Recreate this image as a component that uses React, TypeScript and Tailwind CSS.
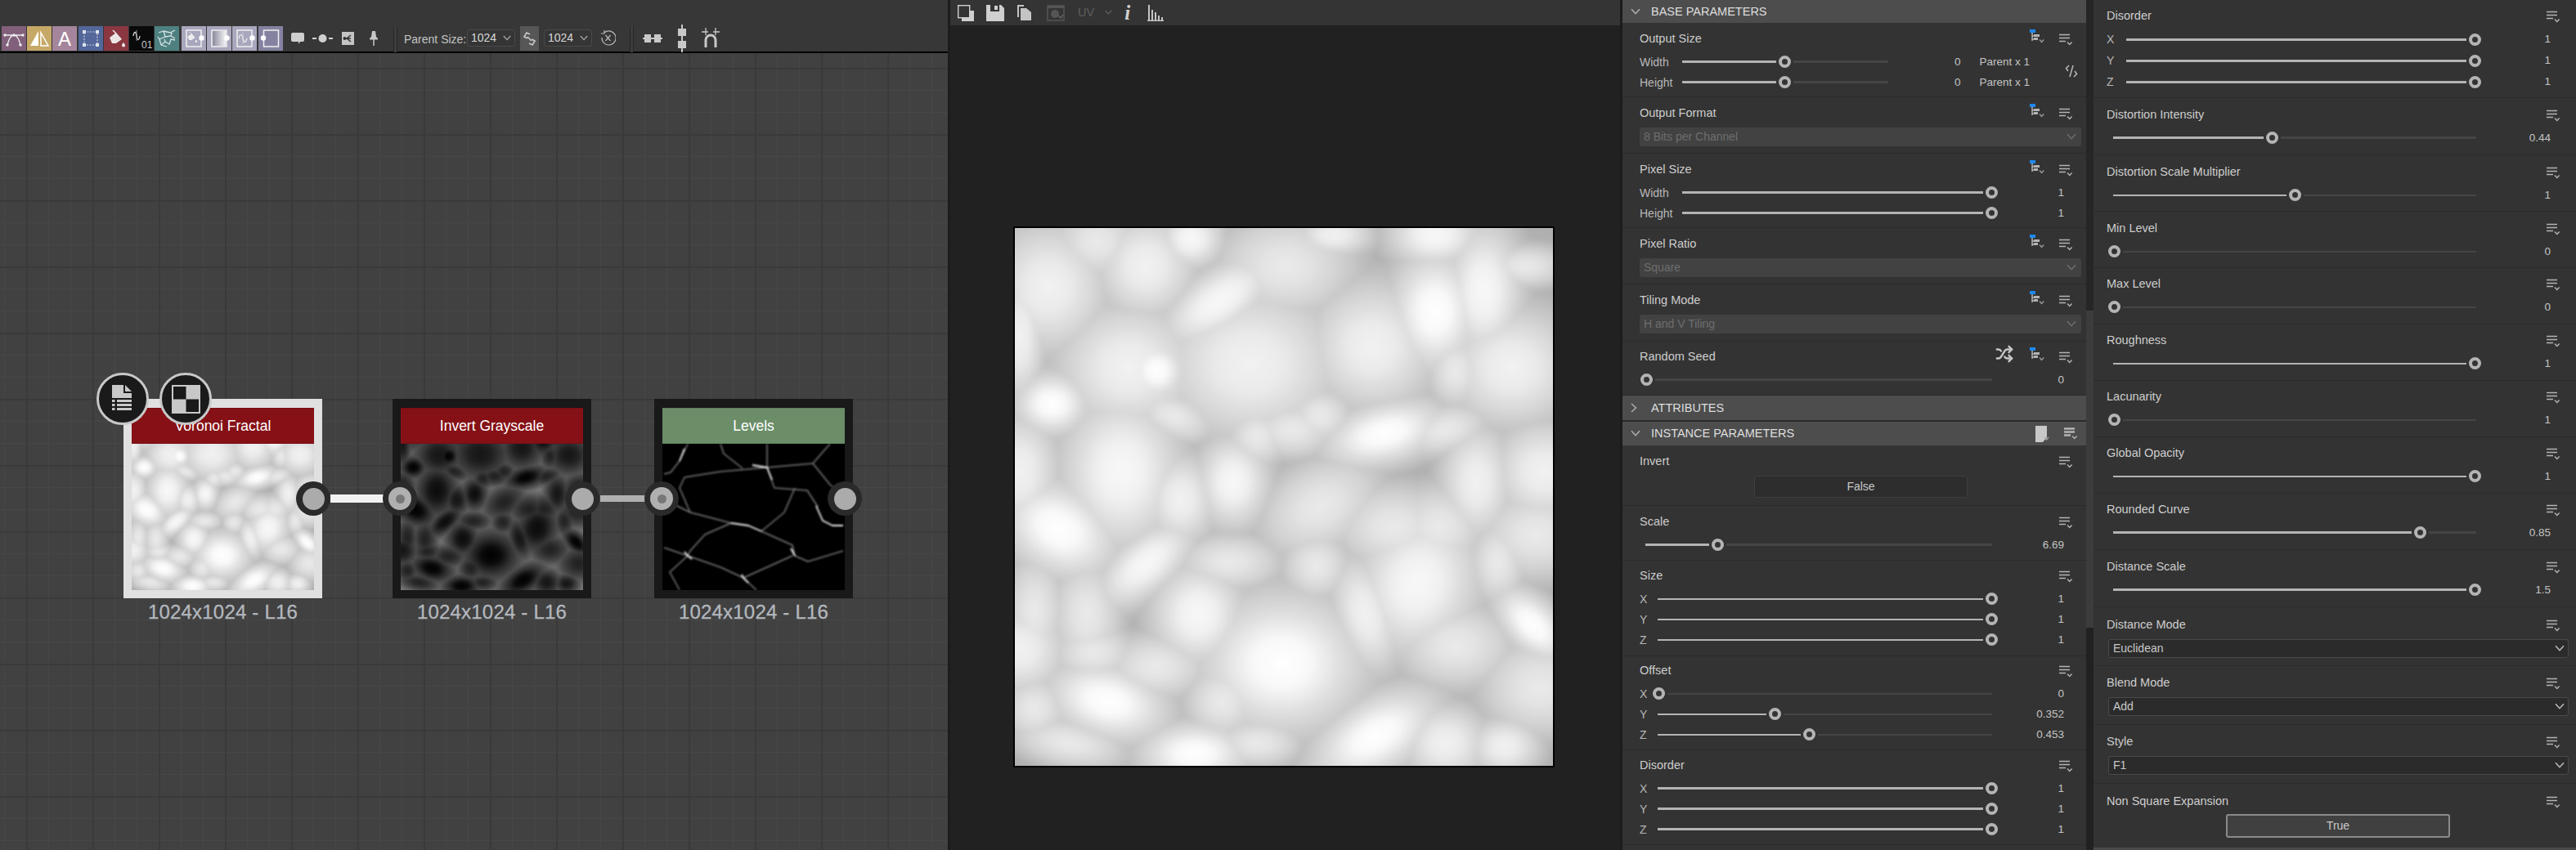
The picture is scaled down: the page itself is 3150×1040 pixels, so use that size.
import React from "react";
import { Shuffle } from "lucide-react";

type Blob = [number, number, number, number, number, number];
const BLOBS: Blob[] = [
  [350, 420, 150, 135, 0, 2], [430, 430, 60, 60, 0, 0], [700, 410, 190, 160, 0, 2], [610, 230, 140, 65, -35, 1],
  [400, 130, 105, 110, 0, 2], [130, 525, 75, 62, 0, 0], [330, 720, 125, 160, 0, 1], [1085, 610, 125, 62, -15, 0],
  [1230, 260, 90, 120, 0, 0], [1370, 200, 80, 140, 0, 1], [1050, 360, 135, 135, 0, 2], [650, 750, 75, 95, 0, 1],
  [150, 885, 125, 90, 30, 0], [400, 985, 125, 60, -40, 1], [550, 1130, 95, 105, 0, 1], [790, 1270, 165, 140, 0, 0],
  [1180, 1040, 125, 150, 20, 1], [1110, 880, 125, 90, 0, 3], [290, 1380, 125, 75, 15, 0], [1060, 1480, 140, 75, -30, 0],
  [1510, 1160, 95, 52, 45, 0], [1450, 420, 140, 125, 0, 2], [1030, 1130, 65, 125, -15, 2], [900, 820, 140, 95, -30, 3],
  [40, 1230, 95, 95, 0, 2], [230, 1130, 75, 120, 0, 3], [540, 1530, 110, 62, 0, 0], [1350, 750, 75, 120, 0, 2],
  [1540, 720, 105, 105, 0, 2], [500, 800, 75, 95, 0, 2], [120, 190, 125, 135, 0, 2], [800, 130, 150, 110, 0, 3],
  [1230, 40, 95, 65, 0, 1], [530, 50, 65, 60, 0, 1], [940, 40, 80, 45, 0, 2], [40, 720, 80, 125, 0, 2],
  [40, 330, 50, 140, 0, 2], [1290, 1220, 125, 90, 0, 3], [890, 990, 72, 72, 0, 3], [1530, 1340, 125, 105, 0, 3],
  [1260, 600, 95, 52, -15, 3], [1490, 130, 90, 45, 0, 3], [1260, 1500, 90, 80, 0, 2], [1430, 1510, 75, 60, 0, 2],
  [820, 600, 95, 60, 0, 3], [720, 620, 65, 65, 30, 3], [180, 1500, 125, 52, 10, 3], [720, 1500, 95, 52, 0, 3],
  [80, 1120, 65, 120, 0, 3], [1520, 900, 125, 95, 0, 3], [260, 60, 95, 80, 0, 3],
  [900, 560, 70, 60, 0, 3], [1240, 880, 100, 90, 0, 3], [480, 560, 90, 50, 20, 3], [430, 1280, 110, 70, 0, 3], [620, 1380, 80, 80, 0, 3],
  [1290, 430, 60, 80, 0, 3], [250, 1240, 90, 60, 0, 3], [640, 980, 110, 60, 0, 3], [1410, 980, 60, 90, 0, 3], [80, 1400, 70, 70, 0, 3],
];
const STOPS: string[][] = [
  ["#ffffff", "#f8f8f8", "#e0e0e0", "#a8a8a8"],
  ["#f8f8f8", "#f1f1f1", "#dcdcdc", "#a4a4a4"],
  ["#f2f2f2", "#eaeaea", "#d8d8d8", "#a0a0a0"],
  ["#eaeaea", "#e2e2e2", "#d3d3d3", "#9c9c9c"],
];

function Voronoi({ className }: { className?: string }) {
  return (
    <svg viewBox="24 20 1545 1545" preserveAspectRatio="none" className={className}>
      <defs>
        {STOPS.map((s, i) => (
          <radialGradient key={i} id={`vt${i}`}>
            <stop offset="0%" stopColor={s[0]} />
            <stop offset="22%" stopColor={s[1]} />
            <stop offset="43%" stopColor={s[2]} />
            <stop offset="100%" stopColor={s[3]} />
          </radialGradient>
        ))}
        <filter id="vblur" x="-5%" y="-5%" width="110%" height="110%">
          <feGaussianBlur stdDeviation="6" />
        </filter>
      </defs>
      <g filter="url(#vblur)" className="isolate">
        <rect x="-100" y="-100" width="1800" height="1800" fill="#b0b0b0" />
        {BLOBS.map(([x, y, rx, ry, r, t], i) => (
          <ellipse key={i} cx={x} cy={y} rx={rx * 2.3} ry={ry * 2.3} transform={`rotate(${r} ${x} ${y})`} fill={`url(#vt${t})`} className="mix-blend-lighten" />
        ))}
      </g>
    </svg>
  );
}

function LevelLines() {
  const faint = [
    "M31 0L21 21L10 35L2 37",
    "M71 0L75 12L98 30",
    "M128 0L128 29",
    "M27 41L21 54L34 84",
    "M27 41L71 34L128 29L184 24L205 0",
    "M128 29L137 54L177 57L190 77",
    "M162 54L149 84L121 107",
    "M84 97L46 87L34 84L10 72",
    "M84 97L52 111L34 131L31 137L9 157L21 179",
    "M2 127L31 137L71 151L99 164L115 179",
    "M99 164L159 137",
    "M121 107L159 124L162 137L178 144L221 131",
    "M184 24L205 50L221 62",
  ];
  const bright = ["M110 26L128 29L134 44", "M84 97L105 100L121 107", "M188 76L196 94L208 100L221 100", "M27 132L31 137L36 141", "M21 21L27 6", "M97 160L99 164L105 170", "M157 128L162 137"];
  return (
    <svg width="223" height="179" viewBox="0 0 223 179" fill="none" strokeLinejoin="round" className="block">
      <defs><filter id="lvb" x="-5%" y="-5%" width="110%" height="110%"><feGaussianBlur stdDeviation="0.8" /></filter></defs>
      <rect width="223" height="179" fill="#000000" />
      <g filter="url(#lvb)">
        <g stroke="#7c7c7c" strokeWidth="1.5">{faint.map((d) => <path key={d} d={d} />)}</g>
        <g stroke="#f0f0f0" strokeWidth="1.8">{bright.map((d) => <path key={d} d={d} />)}</g>
      </g>
    </svg>
  );
}

/* ---------- small parameter icons ---------- */
function ListIcon({ bold }: { bold?: boolean }) {
  const w = bold ? 2.6 : 1.5;
  return (
    <svg width="17" height="15" viewBox="0 0 17 15" className="shrink-0" fill="none" stroke="#b4b4b4">
      <path d="M0 1.5H13M0 5.5H13M0 9.5H8" strokeWidth={w} />
      <path d="M10 10.5l2.8 3 2.8-3" strokeWidth="1.4" />
    </svg>
  );
}
function InheritIcon() {
  return (
    <svg width="19" height="18" viewBox="0 0 19 18" className="shrink-0" fill="none">
      <rect x="0" y="0" width="7" height="4" fill="#1e88ef" />
      <path d="M3 4V14M3 8H11M3 12H9" stroke="#b4b4b4" strokeWidth="1.5" />
      <rect x="5" y="6" width="7" height="3" fill="#b4b4b4" />
      <rect x="5" y="10" width="5" height="3" fill="#b4b4b4" />
      <path d="M12 12.5l2.6 3 2.6-3" stroke="#9a9a9a" strokeWidth="1.4" />
    </svg>
  );
}
function Chevron({ cls = "#8a8a8a", size = 12 }: { cls?: string; size?: number }) {
  return (
    <svg width={size} height={size * 0.7} viewBox="0 0 12 8" className="shrink-0" fill="none" stroke={cls}>
      <path d="M1 1l5 5.5L11 1" strokeWidth="1.5" />
    </svg>
  );
}
function BrokenLink() {
  return (
    <svg width="16" height="16" viewBox="0 0 16 16" fill="none" stroke="#b4b4b4" strokeWidth="1.6">
      <path d="M5 1L1.5 4.5 4 8M11 15l3.5-3.5L12 8M10 1L6 15" />
    </svg>
  );
}

/* ---------- slider ---------- */
function Slider({ label, w, tc, value, thin, p2, extra }: { label?: string; w: number; tc: number; value?: string; thin?: boolean; p2?: boolean; extra?: React.ReactNode }) {
  const thumbStart = tc - 7.5;
  const fill = Math.max(0, thumbStart - 3);
  const h = thin ? "h-[2px]" : "h-[3px]";
  const xyz = label && label.length === 1;
  const pl = label ? (p2 ? "pl-[16px]" : "pl-[21px]") : p2 ? "pl-[24px]" : "pl-[28px]";
  const lw = xyz ? (p2 ? "w-[24px]" : "w-[22px]") : "w-[52px]";
  const pr = p2 ? "pr-[31px]" : "pr-[27px]";
  return (
    <div className={`flex items-center h-[25px] ${pl} ${pr}`}>
      {label && <span className={`${lw} mt-[1px] text-[14px] text-[#b8b8b8] shrink-0`}>{label}</span>}
      <div className="flex items-center shrink-0" style={{ width: w }}>
        {fill > 0 && <div className={`${h} bg-[#b4b4b4] shrink-0`} style={{ width: fill, marginRight: 3 }} />}
        <div className="w-[15px] h-[15px] rounded-full border-4 border-[#b4b4b4] bg-[#333333] shrink-0" style={fill > 0 ? undefined : { marginLeft: thumbStart }} />
        <div className={`${h} flex-1 ml-[3px] bg-[#454545]`} />
      </div>
      {extra}
      {value && <span className="ml-auto mt-[1px] text-[13.5px] text-[#c4c4c4]">{value}</span>}
    </div>
  );
}

/* ---------- rows ---------- */
function Row({ h, title, p2, inherit, shuffle, children, pad = "pt-[3px]" }: { h: string; title: string; p2?: boolean; inherit?: boolean; shuffle?: boolean; children?: React.ReactNode; pad?: string }) {
  return (
    <div className={`${h} ${pad} shrink-0 border-b border-[#2b2b2b]`}>
      <div className={`flex items-center h-[32px] ${p2 ? "pl-[16px] pr-[19px]" : "pl-[21px] pr-[16px]"}`}>
        <span className="mt-[1px] text-[14.5px] text-[#cdcdcd]">{title}</span>
        <div className="ml-auto flex items-center">
          {shuffle && <Shuffle size={22} strokeWidth={2.6} color="#c8c8c8" className="mr-[20px] -mt-[6px]" />}
          {inherit && <div className="mr-[17px] -mt-[4px]"><InheritIcon /></div>}
          <div className="mt-[3px]"><ListIcon /></div>
        </div>
      </div>
      {children}
    </div>
  );
}

function Disabled({ text }: { text: string }) {
  return (
    <div className="mt-[2px] ml-[21px] w-[540px] h-[23px] rounded-[3px] bg-[#424242] flex items-center pl-[5px] pr-[6px] text-[14px] text-[#6e6e6e]">
      <span>{text}</span>
      <span className="ml-auto"><Chevron cls="#6e6e6e" /></span>
    </div>
  );
}
function Drop({ text }: { text: string }) {
  return (
    <div className="mt-[2px] ml-[18px] w-[563px] h-[23px] rounded-[3px] bg-[#2b2b2b] border border-[#4a4a4a] flex items-center pl-[5px] pr-[4px] text-[14px] text-[#c8c8c8]">
      <span>{text}</span>
      <span className="ml-auto"><Chevron cls="#bcbcbc" /></span>
    </div>
  );
}
function Section({ title, open, h, right }: { title: string; open?: boolean; h: string; right?: React.ReactNode }) {
  return (
    <div className={`${h} shrink-0 flex items-center bg-[#4d4d4d] pl-[10px] pr-[10px]`}>
      <span className="w-[25px]">
        {open ? (
          <Chevron cls="#b0b0b0" />
        ) : (
          <svg width="8" height="12" viewBox="0 0 8 12" fill="none" stroke="#b0b0b0" strokeWidth="1.4"><path d="M1 1l5.5 5L1 11" /></svg>
        )}
      </span>
      <span className="mt-[1px] text-[14.5px] text-[#dedede]">{title}</span>
      {right && <span className="ml-auto flex items-center gap-[17px]">{right}</span>}
    </div>
  );
}

/* ---------- toolbar tiles ---------- */
const Frame = ({ x = 6, children }: { x?: number; children?: React.ReactNode }) => (
  <>
    <rect x={x} y="5" width="18" height="20" fill="none" stroke="#f0f0f0" strokeWidth="1.5" />
    {children}
  </>
);
function Tile({ bg, children, cls = "" }: { bg: string; children: React.ReactNode; cls?: string }) {
  return (
    <div className={`w-[30px] h-[30px] shrink-0 ${bg} ${cls}`}>
      <svg width="30" height="30" viewBox="0 0 30 30">{children}</svg>
    </div>
  );
}
const Bucket = ({ t = "", c = "#f0f0f0" }: { t?: string; c?: string }) => (
  <g transform={t} fill="none" stroke={c} strokeWidth="1.5">
    <path d="M7 14L15 8l7 8-7 5H10z" fill={c} stroke="none" opacity="0.95" />
    <path d="M11 5l4 4" />
    <path d="M24 20c1.5 2 2 3 2 3.6a2 2 0 01-4 0c0-.6.5-1.6 2-3.6z" fill={c} stroke="none" />
  </g>
);
function ToolTiles() {
  return (
    <div className="flex items-center">
      <div className="flex gap-[1px] ml-[2px]">
        <Tile bg="bg-[#82607b]">
          <path d="M4 11H26M7 23C9 15 12 11 15 11s6 4 8 12" fill="none" stroke="#eeeeee" strokeWidth="1.3" />
          {[[4, 11], [15, 11], [26, 11], [7, 23], [23, 23]].map(([x, y]) => <circle key={`${x}${y}`} cx={x} cy={y} r="1.7" fill="#eeeeee" />)}
        </Tile>
        <Tile bg="bg-[#c6a966]">
          <polygon points="14,6 14,24 4,24" fill="#fff" />
          <polygon points="17,8 17,24 26,24" fill="none" stroke="#fff" strokeWidth="1.5" />
        </Tile>
        <Tile bg="bg-[#a5859b]">
          <text x="15" y="24" textAnchor="middle" fontSize="24" fontFamily="Liberation Sans" fill="#fff">A</text>
        </Tile>
      </div>
      <div className="flex gap-[1px] ml-[2px]">
        <Tile bg="bg-[#53679a]">
          <rect x="7" y="7" width="16" height="16" fill="none" stroke="#c9d0e4" strokeWidth="1.2" strokeDasharray="2 1.6" />
          {[[7, 7], [23, 7], [7, 23], [23, 23]].map(([x, y]) => <rect key={`${x}${y}`} x={x - 2} y={y - 2} width="4" height="4" fill="#dde2ee" />)}
        </Tile>
        <Tile bg="bg-[#8a3742]"><Bucket /></Tile>
        <Tile bg="bg-[#0a0a0a]">
          <path d="M5 12c1-6 3-6 4 0s3 6 4 0" fill="none" stroke="#d8d8d8" strokeWidth="1.3" />
          <path d="M9 5V18" stroke="#9a9a9a" strokeWidth="1" />
          <text x="15" y="27" fontSize="12" fontFamily="Liberation Sans" fill="#c8c8c8">01</text>
        </Tile>
        <Tile bg="bg-[#4e8080]">
          <path d="M5 8l6-2 8 2 6-3M11 6l2 7-7 3-2-3M13 13l7-1 1-4M20 12l5 3M6 16l2 7 7 2M8 23l5-4 5 3 2-6 5 1M13 19l-1-3" fill="none" stroke="#d6e2e2" strokeWidth="1.3" />
        </Tile>
      </div>
      <div className="flex gap-[1px] ml-[3px]">
        <Tile bg="bg-[#a9a7bd]">
          <Frame><g transform="translate(3 4) scale(0.62)"><Bucket /></g></Frame>
          <circle cx="24.5" cy="14.5" r="3.2" fill="#fff" />
        </Tile>
        <Tile bg="bg-[#a9a7bd]">
          <defs><linearGradient id="tg"><stop offset="0%" stopColor="#8a8aa0" /><stop offset="100%" stopColor="#f4f4f4" /></linearGradient></defs>
          <Frame><rect x="7" y="6" width="16" height="18" fill="url(#tg)" /></Frame>
          <circle cx="24.5" cy="14.5" r="3.2" fill="#fff" />
        </Tile>
        <Tile bg="bg-[#a9a7bd]">
          <Frame><path d="M8 15c1.5-6 3.5-6 5 0s3.500 6 5 0" fill="none" stroke="#f0f0f0" strokeWidth="1.2" /><path d="M13 8v14" stroke="#d8d8e0" strokeWidth="0.8" /></Frame>
          <circle cx="24.5" cy="14.5" r="3.2" fill="#fff" />
        </Tile>
      </div>
      <div className="ml-[2px]">
        <Tile bg="bg-[#8482a0]">
          <Frame x={6.5} />
          <circle cx="6" cy="14.5" r="3.2" fill="#fff" />
        </Tile>
      </div>
      <svg width="18" height="16" viewBox="0 0 18 16" className="ml-[9px]"><path d="M3 1h12a2 2 0 012 2v7a2 2 0 01-2 2h-3l-2 3v-3H3a2 2 0 01-2-2V3a2 2 0 012-2z" fill="#cfcfcf" /></svg>
      <svg width="25" height="12" viewBox="0 0 25 12" className="ml-[9px]" fill="#cfcfcf"><circle cx="12.500" cy="6" r="5" /><rect x="0" y="5" width="5" height="2" /><rect x="20" y="5" width="5" height="2" /></svg>
      <svg width="15" height="16" viewBox="0 0 15 16" className="ml-[11px]"><rect width="15" height="16" fill="#c4c4c4" /><path d="M3 8h3l5-4M6 8h5M6 8l5 4" stroke="#333" strokeWidth="1.6" fill="none" /><circle cx="3.500" cy="8" r="2" fill="#333" /></svg>
      <svg width="10" height="18" viewBox="0 0 10 18" className="ml-[19px]" fill="#c8c8c8"><path d="M3 0h4l1 7 2 2H0l2-2z" /><rect x="0" y="9" width="10" height="1.500" /><rect x="4.300" y="10" width="1.500" height="8" /></svg>
    </div>
  );
}
function SizeBox() {
  return (
    <div className="w-[59px] h-[21px] shrink-0 flex items-center justify-between px-[4px] rounded-[3px] border border-[#4a4a4a] bg-[#353535] text-[14px] text-[#d8d8d8]">
      <span>1024</span><Chevron cls="#aaaaaa" size={10} />
    </div>
  );
}
const Sep = ({ cls }: { cls: string }) => <div className={`h-[32px] w-[5px] border-x border-[#262626] bg-[#3d3d3d] shrink-0 ${cls}`} />;

function Toolbar() {
  return (
    <div className="h-[65px] shrink-0 bg-[#373737] border-b-2 border-black pt-[32px]">
      <div className="flex items-start">
        <ToolTiles />
        <Sep cls="ml-[19px]" />
        <span className="ml-[8px] mt-[6px] text-[14px] text-[#c4c4c4] w-[77px] shrink-0">Parent Size:</span>
        <div className="mt-[4px]"><SizeBox /></div>
        <div className="ml-[6px] w-[23px] h-[30px] shrink-0 bg-[#565656] flex items-center justify-center">
          <svg width="15" height="17" viewBox="0 0 15 17" fill="none" stroke="#c8c8c8" strokeWidth="1.6"><path d="M8 3L4 1 1 6l4 2M7 14l4 2 3-5-4-2M5 6l5 5" /></svg>
        </div>
        <div className="ml-[6px] mt-[4px]"><SizeBox /></div>
        <svg width="19" height="22" viewBox="0 0 19 22" fill="none" stroke="#b8b8b8" strokeWidth="1.2" className="ml-[10px] mt-[4px]">
          <path d="M5 4a8.500 8.500 0 11-3 6M5 1v4H1" /><path d="M6.500 7l6 7M12.500 7l-6 7" />
        </svg>
        <Sep cls="ml-[17px]" />
        <svg width="24" height="16" viewBox="0 0 24 16" fill="#c8c8c8" className="ml-[11px] mt-[7px]"><rect x="0" y="7" width="24" height="2" /><rect x="2" y="3" width="8" height="10" /><rect x="14" y="3" width="8" height="10" /></svg>
        <svg width="10" height="34" viewBox="0 0 10 34" fill="#c8c8c8" className="ml-[19px] -mt-[2px]"><rect x="4" width="2" height="34" /><rect y="5" width="10" height="9" /><rect y="20" width="10" height="9" /></svg>
        <svg width="22" height="26" viewBox="0 0 22 26" fill="none" stroke="#c8c8c8" strokeWidth="1.3" className="ml-[19px] mt-[1px]">
          <path d="M0 6H8M14 6H22M5 1V10M17 1V10" /><path d="M5 25V16a6 6 0 0112 0v9" strokeWidth="3" />
        </svg>
      </div>
    </div>
  );
}

/* ---------- graph ---------- */
function Node({ cls, frame, header, title, level }: { cls: string; frame: string; header: string; title: string; level: "a" | "b" | "c" }) {
  const f = level === "b" ? "[filter:invert(1)_brightness(1.5)]" : "";
  return (
    <div className={`absolute top-[423px] w-[243px] ${cls}`}>
      <div className={`h-[244px] pt-[11px] px-[10px] ${frame}`}>
        <div className={`relative z-[1] h-[44px] flex items-center justify-center text-[17.5px] text-white border-y border-black/10 ${header}`}>{title}</div>
        <div className="h-[179px] overflow-hidden">
          {level === "c" ? <LevelLines /> : <div className="-mt-[44px]"><Voronoi className={`block w-[223px] h-[223px] ${f}`} /></div>}
        </div>
      </div>
      <div className="mt-[2px] text-center text-[24px] leading-[30px] tracking-[0.2px] text-[#b3b7bd] [-webkit-text-stroke:0.3px_#b3b7bd]">1024x1024 - L16</div>
    </div>
  );
}
const SocketOut = ({ cls }: { cls: string }) => (
  <div className={`absolute z-10 top-[524px] w-[42px] h-[42px] rounded-full bg-[#2a2a2a] flex items-center justify-center ${cls}`}>
    <div className="w-[27px] h-[27px] rounded-full bg-[#ababab]" />
  </div>
);
const SocketIn = ({ cls }: { cls: string }) => (
  <div className={`absolute z-10 top-[524px] w-[42px] h-[42px] rounded-full bg-[#2a2a2a] flex items-center justify-center ${cls}`}>
    <div className="w-[28px] h-[28px] rounded-full bg-[#b0b0b0] flex items-center justify-center">
      <div className="w-[11px] h-[11px] rounded-full bg-[#787878]" />
    </div>
  </div>
);
const Badge = ({ cls, children }: { cls: string; children: React.ReactNode }) => (
  <div className={`absolute z-20 top-[391px] w-[64px] h-[64px] rounded-full bg-[#1a1a1a] border-[3.5px] border-[#c8c8c8] flex items-center justify-center ${cls}`}>{children}</div>
);

function Graph() {
  return (
    <div className="relative flex-1 overflow-hidden bg-[#414141] bg-[linear-gradient(to_right,#3a3a3a_2px,transparent_2px),linear-gradient(to_bottom,#3a3a3a_2px,transparent_2px),linear-gradient(to_right,#474747_1px,transparent_1px),linear-gradient(to_bottom,#474747_1px,transparent_1px)] [background-size:81px_81px,81px_81px,27px_27px,27px_27px] [background-position:32px_0,0_18px,5px_0,0_18px]">
      <div className="absolute left-[404px] top-[540px] w-[66px] h-[10px] bg-[#f2f2f2]" />
      <div className="absolute left-[734px] top-[541px] w-[56px] h-[8px] bg-[#b0b0b0]" />
      <Node cls="left-[151px]" frame="bg-[#e0e0e0]" header="bg-[#851116]" title="Voronoi Fractal" level="a" />
      <Node cls="left-[480px]" frame="bg-[#191919]" header="bg-[#851116]" title="Invert Grayscale" level="b" />
      <Node cls="left-[800px]" frame="bg-[#191919]" header="bg-[#6b8e68]" title="Levels" level="c" />
      <SocketOut cls="left-[362px]" />
      <SocketIn cls="left-[468px]" />
      <SocketOut cls="left-[691px]" />
      <SocketIn cls="left-[788px]" />
      <SocketOut cls="left-[1012px]" />
      <Badge cls="left-[118px]">
        <svg width="26" height="34" viewBox="0 0 26 34" fill="#c8c8c8">
          <path d="M0 0H14V10H24V16H0z" /><path d="M16 0l8 8h-8z" />
          <rect y="18" width="3.500" height="3" /><rect x="6" y="18" width="18" height="3" />
          <rect y="23" width="3.500" height="3" /><rect x="6" y="23" width="18" height="3" />
          <rect y="28" width="3.500" height="3" /><rect x="6" y="28" width="18" height="3" />
        </svg>
      </Badge>
      <Badge cls="left-[195px]">
        <svg width="35" height="35" viewBox="0 0 35 35">
          <rect width="35" height="35" fill="#c8c8c8" />
          <rect x="2" y="2" width="15.500" height="15.500" fill="#1a1a1a" />
          <rect x="17.500" y="17.500" width="15.500" height="15.500" fill="#1a1a1a" />
        </svg>
      </Badge>
    </div>
  );
}

/* ---------- viewer ---------- */
function ViewerBar() {
  return (
    <div className="h-[31px] shrink-0 bg-[#343434] flex items-center pl-[9px]">
      <svg width="20" height="20" viewBox="0 0 20 20" fill="none"><rect x="5" y="7" width="15" height="13" fill="#cfcfcf" /><rect x="0.700" y="0.700" width="14" height="15" fill="#343434" stroke="#cfcfcf" strokeWidth="1.400" /></svg>
      <svg width="22" height="20" viewBox="0 0 22 20" fill="#cfcfcf" className="ml-[15px]"><path d="M0 0H18L22 4V20H0z" /><rect x="5" y="0" width="11" height="8" fill="#343434" /><rect x="10" y="1" width="4" height="5" fill="#cfcfcf" /></svg>
      <svg width="17" height="19" viewBox="0 0 17 19" fill="#c4c4c4" className="ml-[16px]"><path d="M0 0H8V2H2V15H0z" /><path d="M4 4H11L17 9V19H4z" /></svg>
      <svg width="22" height="20" viewBox="0 0 22 20" fill="none" className="ml-[19px]"><rect x="1" y="1" width="20" height="18" stroke="#555" strokeWidth="1.500" /><rect x="1" y="1" width="20" height="3" fill="#555" /><circle cx="10" cy="11" r="5" fill="#555" /><path d="M14 13l3 3 3-4" stroke="#666" strokeWidth="1.300" /></svg>
      <span className="ml-[16px] text-[14.5px] text-[#5e5e5e]">UV</span>
      <span className="ml-[13px]"><Chevron cls="#666666" size={9} /></span>
      <span className="ml-[15px] font-['Liberation_Serif'] italic font-bold text-[25px] leading-none text-[#d0d0d0]">i</span>
      <svg width="20" height="20" viewBox="0 0 20 20" fill="#c4c4c4" className="ml-[21px]"><rect y="18.500" width="20" height="1.500" /><rect x="1" width="2" height="19" /><rect x="5" y="6" width="2" height="13" /><rect x="9" y="9" width="2" height="10" /><rect x="13" y="13" width="2" height="6" /><rect x="17" y="15" width="2" height="4" /></svg>
    </div>
  );
}

/* ---------- app ---------- */
export default function App() {
  const parentX = (
    <>
      <span className="ml-[81px] mt-[1px] text-[13.5px] text-[#c4c4c4]">0</span>
      <span className="ml-[23px] mt-[1px] text-[13.5px] text-[#c4c4c4]">Parent x 1</span>
    </>
  );
  return (
    <div className="flex w-[3150px] h-[1040px] overflow-hidden bg-[#212121] font-['Liberation_Sans',sans-serif]">
      <div className="w-[1159px] shrink-0 flex flex-col">
        <Toolbar />
        <Graph />
      </div>
      <div className="w-[3px] shrink-0 bg-[#1c1c1c]" />
      <div className="w-[819px] shrink-0 flex flex-col">
        <ViewerBar />
        <div className="flex-1 pl-[77px] pt-[246px]">
          <div className="w-[662px] h-[662px] border-2 border-black">
            <Voronoi className="block w-[658px] h-[658px]" />
          </div>
        </div>
      </div>
      <div className="w-[3px] shrink-0 bg-[#1c1c1c]" />

      {/* first parameter column */}
      <div className="w-[567px] shrink-0 bg-[#333333] flex flex-col">
        <Section title="BASE PARAMETERS" open h="h-[28px]" />
        <Row h="h-[91px]" title="Output Size" inherit>
          <div className="flex">
            <div className="flex-1">
              <Slider label="Width" w={252} tc={125} extra={parentX} />
              <Slider label="Height" w={252} tc={125} extra={parentX} />
            </div>
            <div className="w-[0px] relative"><div className="absolute right-[10px] top-[16px]"><BrokenLink /></div></div>
          </div>
        </Row>
        <Row h="h-[69px]" title="Output Format" inherit><Disabled text="8 Bits per Channel" /></Row>
        <Row h="h-[91px]" title="Pixel Size" inherit>
          <Slider label="Width" w={386} tc={378} value="1" />
          <Slider label="Height" w={386} tc={378} value="1" />
        </Row>
        <Row h="h-[69px]" title="Pixel Ratio" inherit><Disabled text="Square" /></Row>
        <Row h="h-[70px]" title="Tiling Mode" inherit><Disabled text="H and V Tiling" /></Row>
        <Row h="h-[66px]" title="Random Seed" inherit shuffle pad="pt-[2px]">
          <Slider w={424} tc={1} value="0" />
        </Row>
        <Section title="ATTRIBUTES" h="h-[30px]" />
        <div className="h-[2px] shrink-0 bg-[#2b2b2b]" />
        <Section title="INSTANCE PARAMETERS" open h="h-[29px]" right={
          <>
            <svg width="19" height="20" viewBox="0 0 19 20" fill="#c8c8c8"><path d="M1 0H15V14L10 20H1z" /><path d="M12 14l2.500 3 2.500-3" fill="none" stroke="#aaa" strokeWidth="1.400" /></svg>
            <ListIcon bold />
          </>
        } />
        <Row h="h-[74px]" title="Invert">
          <div className="mt-[2px] ml-[161px] w-[261px] h-[27px] rounded-[3px] bg-[#2d2d2d] border border-[#3f3f3f] flex items-center justify-center text-[14px] text-[#c8c8c8]">False</div>
        </Row>
        <Row h="h-[67px]" title="Scale"><Slider w={424} tc={88} value="6.69" /></Row>
        <Row h="h-[117px]" title="Size" pad="pt-[2px]">
          {["X", "Y", "Z"].map((l) => <Slider key={l} label={l} w={416} tc={408} value="1" thin />)}
        </Row>
        <Row h="h-[115px]" title="Offset" pad="pt-[1px]">
          <Slider label="X" w={409} tc={1} value="0" thin />
          <Slider label="Y" w={409} tc={143} value="0.352" thin />
          <Slider label="Z" w={409} tc={185} value="0.453" thin />
        </Row>
        <Row h="h-[116px]" title="Disorder" pad="pt-[2px]">
          {["X", "Y", "Z"].map((l) => <Slider key={l} label={l} w={416} tc={408} value="1" />)}
        </Row>
      </div>

      {/* gutter with scrollbar */}
      <div className="w-[9px] shrink-0 flex flex-col bg-[#212121]">
        <div className="h-[380px] shrink-0 bg-[#262626]" />
        <div className="h-[388px] shrink-0 bg-[#3c3c3c]" />
      </div>

      {/* second parameter column */}
      <div className="flex-1 flex flex-col bg-[#333333]">
        <Row h="h-[120px]" title="Disorder" p2>
          {["X", "Y", "Z"].map((l) => (
            <div key={l} className="h-[26px] flex items-center"><div className="flex-1"><Slider label={l} w={434} tc={426} value="1" p2 /></div></div>
          ))}
        </Row>
        <Row h="h-[70px]" title="Distortion Intensity" p2 pad="pt-[4px]"><Slider w={444} tc={194} value="0.44" p2 /></Row>
        <Row h="h-[69px]" title="Distortion Scale Multiplier" p2 pad="pt-[4px]"><Slider w={444} tc={222} value="1" p2 thin /></Row>
        <Row h="h-[69px]" title="Min Level" p2 pad="pt-[4px]"><Slider w={444} tc={1} value="0" p2 thin /></Row>
        <Row h="h-[69px]" title="Max Level" p2 pad="pt-[3px]"><Slider w={444} tc={1} value="0" p2 thin /></Row>
        <Row h="h-[69px]" title="Roughness" p2 pad="pt-[3px]"><Slider w={450} tc={442} value="1" p2 thin /></Row>
        <Row h="h-[69px]" title="Lacunarity" p2 pad="pt-[3px]"><Slider w={444} tc={1} value="1" p2 thin /></Row>
        <Row h="h-[69px]" title="Global Opacity" p2 pad="pt-[3px]"><Slider w={450} tc={442} value="1" p2 thin /></Row>
        <Row h="h-[69px]" title="Rounded Curve" p2 pad="pt-[3px]"><Slider w={444} tc={375} value="0.85" p2 /></Row>
        <Row h="h-[70px]" title="Distance Scale" p2 pad="pt-[4px]"><Slider w={450} tc={442} value="1.5" p2 /></Row>
        <Row h="h-[72px]" title="Distance Mode" p2 pad="pt-[5px]"><Drop text="Euclidean" /></Row>
        <Row h="h-[72px]" title="Blend Mode" p2 pad="pt-[4px]"><Drop text="Add" /></Row>
        <Row h="h-[72px]" title="Style" p2 pad="pt-[4px]"><Drop text="F1" /></Row>
        <div className="h-[78px] shrink-0 pt-[5px]">
          <div className="flex items-center h-[32px] pl-[16px] pr-[19px]">
            <span className="mt-[1px] text-[14.5px] text-[#cdcdcd]">Non Square Expansion</span>
            <div className="ml-auto mt-[3px]"><ListIcon /></div>
          </div>
          <div className="ml-[162px] w-[274px] h-[29px] rounded-[3px] bg-[#404040] border-2 border-[#8a8a8a] flex items-center justify-center text-[14px] text-[#c8c8c8]">True</div>
        </div>
        <div className="flex-1 bg-[#4a4a4a]" />
      </div>
    </div>
  );
}
